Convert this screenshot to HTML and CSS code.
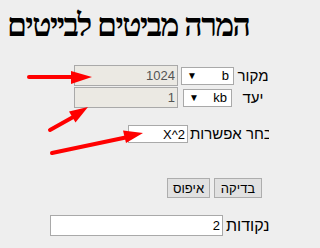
FILE: index.html
```html
<!DOCTYPE html>
<html lang="he">
<head>
<meta charset="utf-8">
<title>המרה מביטים לבייטים</title>
<link rel="stylesheet" href="styles.css">
</head>
<body>
<div class="page">
  <h1 class="title">המרה מביטים לבייטים</h1>
  <div class="conv">
    <span class="lbl">מקור</span>
    <span class="sel sel-src"><span class="sel-val">b</span><span class="sel-arrow">▼</span></span>
    <input class="num" type="text" value="1024" readonly>
    <span class="lbl">יעד</span>
    <span class="sel sel-dst"><span class="sel-val">kb</span><span class="sel-arrow">▼</span></span>
    <input class="num" type="text" value="1" readonly>
  </div>
  <div class="row row-choice">
    <span class="lbl">בחר אפשרות</span>
    <input class="field field-choice" type="text" value="X^2">
  </div>
  <div class="row row-btns">
    <button class="btn btn-check" type="button">בדיקה</button>
    <button class="btn btn-reset" type="button">איפוס</button>
  </div>
  <div class="row row-score">
    <span class="lbl lbl-lg">נקודות</span>
    <input class="field field-score" type="text" value="2">
  </div>
</div>
<svg class="arrows" width="269" height="248" viewBox="0 0 269 248" aria-hidden="true">
  <g stroke="#ff0000" stroke-width="4" stroke-linecap="round" fill="none">
    <line x1="29" y1="77" x2="78" y2="77"/>
    <line x1="50" y1="130" x2="75" y2="116"/>
    <line x1="52" y1="153" x2="128" y2="137"/>
  </g>
  <g fill="#ff0000">
    <polygon points="71,71 92,77 71,84"/>
    <polygon points="69,111.5 88,107 75.5,122.5"/>
    <polygon points="123,130.5 143,133 126,143"/>
  </g>
</svg>
</body>
</html>
```
FILE: styles.css
```css
html {
  overflow: hidden;
  background: #eeeeee;
}
body {
  margin: 0;
  width: 269px;
  height: 248px;
  overflow: hidden;
  position: relative;
  background: #eeeeee;
  font-family: "Liberation Serif", "DejaVu Serif", serif;
  color: #000;
}
.page {
  width: 290px;
  direction: rtl;
}
.title {
  margin: 7px 0 0 0;
  padding-left: 7px;
  font-size: 32px;
  line-height: 36px;
  letter-spacing: -1.6px;
  font-weight: bold;
  white-space: nowrap;
  text-align: left;
}
.conv {
  margin-top: 22px;
  display: grid;
  grid-template-columns: 40px 51px 112px;
  grid-auto-rows: 21px;
  row-gap: 1px;
  justify-content: end;
  padding-left: 70px;
  align-items: center;
  justify-items: center;
}
.lbl {
  font-family: "Liberation Sans", Arial, sans-serif;
  font-size: 15px;
  line-height: 18px;
  white-space: nowrap;
}
.lbl-lg {
  font-size: 16px;
}
.sel {
  box-sizing: border-box;
  height: 18px;
  display: flex;
  align-items: center;
  justify-content: space-between;
  padding: 0 4px 0 5px;
  background: #ffffff;
  border: 1px solid #a9a9a9;
  font-family: "Liberation Sans", Arial, sans-serif;
  font-size: 13px;
}
.sel-src { width: 53px; }
.sel-dst { width: 49px; }
.sel-arrow {
  font-size: 10px;
  line-height: 1;
}
.num, .field {
  box-sizing: border-box;
  margin: 0;
  padding: 0 2px;
  border: 1px solid #a9a9a9;
  font-family: "Liberation Sans", Arial, sans-serif;
  font-size: 13px;
  direction: rtl;
  text-align: right;
  outline: none;
}
.num {
  width: 104px;
  height: 21px;
  background: #ebe9e3;
  color: #545454;
}
.field {
  background: #ffffff;
  color: #000;
}
.row {
  display: flex;
  align-items: center;
  justify-content: flex-end;
}
.row-choice {
  margin-top: 17px;
  padding-left: 128px;
  gap: 2px;
}
.field-choice {
  width: 60px;
  height: 18px;
}
.row-btns {
  margin-top: 35px;
  padding-left: 167px;
  gap: 4px;
}
.btn {
  box-sizing: border-box;
  margin: 0;
  height: 20px;
  padding: 0;
  background: #e1e1e1;
  border: 1px solid #adadad;
  border-radius: 0;
  font-family: "Liberation Sans", Arial, sans-serif;
  font-size: 13px;
  color: #000;
}
.btn-check { width: 48px; }
.btn-reset { width: 43px; }
.row-score {
  margin-top: 17px;
  padding-left: 50px;
  gap: 3px;
}
.field-score {
  width: 173px;
  height: 21px;
}
.arrows {
  position: absolute;
  left: 0;
  top: 0;
  pointer-events: none;
}
```
